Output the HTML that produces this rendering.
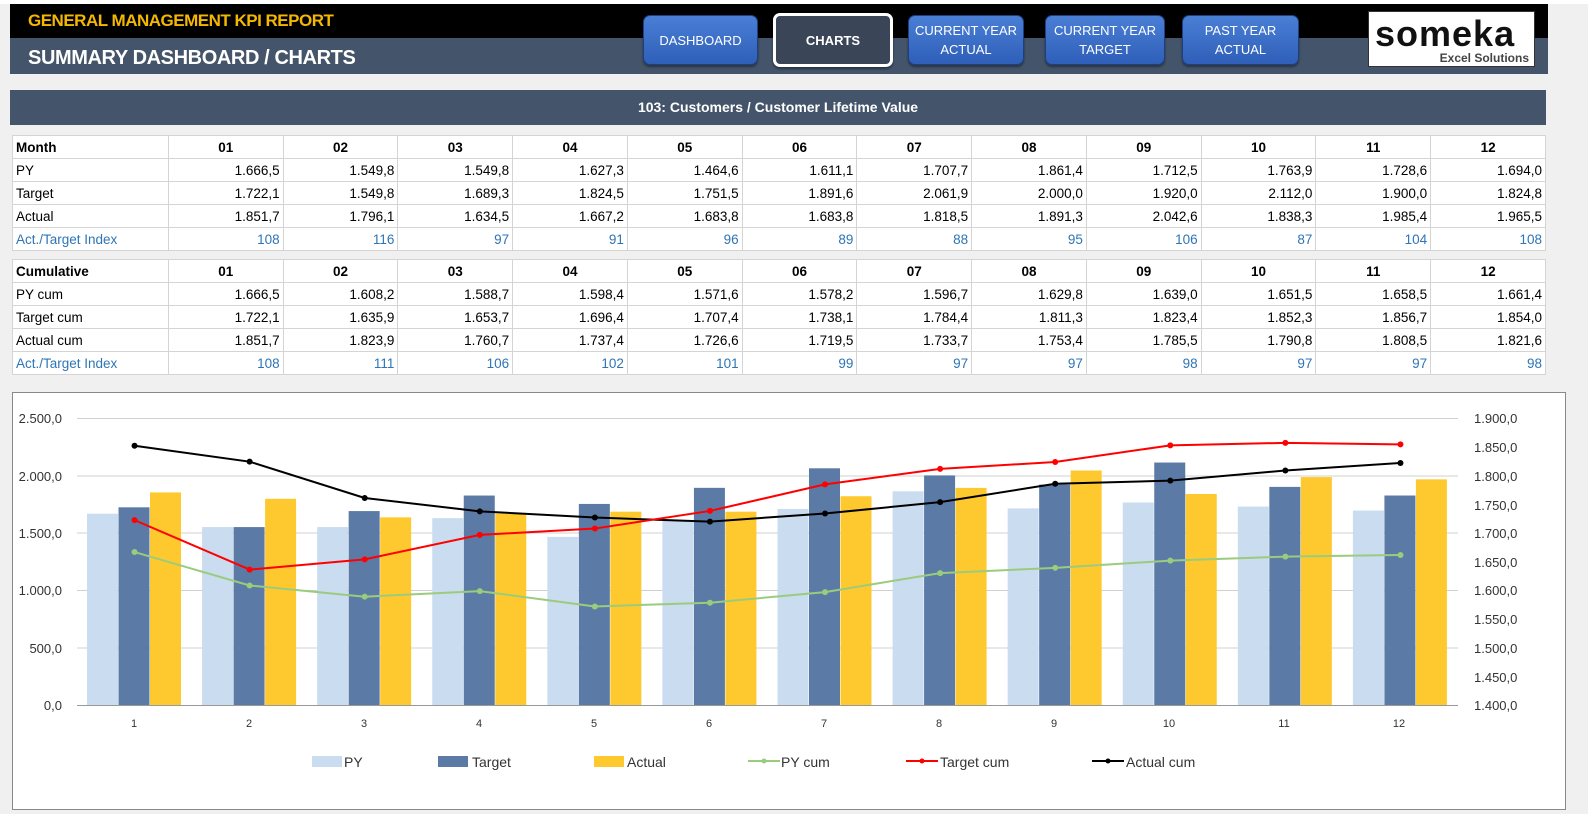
<!DOCTYPE html>
<html><head><meta charset="utf-8"><style>
*{margin:0;padding:0;box-sizing:border-box}
body{width:1588px;height:814px;background:#f0f0f0;font-family:"Liberation Sans",sans-serif;position:relative;overflow:hidden}
.top{position:absolute;left:0;top:0;width:1588px;height:4px;background:#fff}
.blk{position:absolute;left:10px;top:4px;width:1538px;height:34px;background:#000}
.sl{position:absolute;left:10px;top:38px;width:1538px;height:36px;background:#44546a}
.t1{position:absolute;left:28px;top:11px;color:#f5b800;font-weight:bold;font-size:17px;letter-spacing:-0.5px}
.t2{position:absolute;left:28px;top:47px;color:#fff;font-weight:bold;font-size:20px;letter-spacing:-0.4px}
.btn{position:absolute;top:15px;height:50px;border-radius:7px;background:linear-gradient(#4a7fd6,#2f5fb8);border:1px solid #1e3f80;color:#fff;font-size:13px;display:flex;align-items:center;justify-content:center;text-align:center;line-height:19px;box-shadow:0 2px 2px rgba(0,0,0,.4)}
.btn.on{background:#3a4558;border:3px solid #fff;top:13px;height:54px;font-weight:bold}
.logo{position:absolute;left:1368px;top:11px;width:167px;height:56px;background:#fff;border:1px solid #333}
.logo b{position:absolute;left:6px;top:1px;font-size:36px;font-weight:bold;color:#111;letter-spacing:1px}
.logo i{position:absolute;right:5px;top:39px;font-size:12px;font-style:normal;font-weight:bold;color:#444}
.bar{position:absolute;left:10px;top:90px;width:1536px;height:35px;background:#44546a;color:#fff;font-weight:bold;font-size:14px;text-align:center;line-height:35px}
table{position:absolute;left:12px;width:1534px;border-collapse:collapse;background:#fff;font-size:13.5px;border:1px solid #777}
td{height:23px;border:1px solid #d4d4d4;padding:0 3px;text-align:right;width:114.8px}
td:first-child{text-align:left;width:156px}
tr:first-child td{font-weight:bold;text-align:center}
tr:first-child td:first-child{text-align:left}
tr.ix td{color:#2e75b6}
.chart{position:absolute;left:12px;top:392px;width:1554px;height:418px;background:#fff;border:1px solid #888}
</style></head><body>
<div class="top"></div><div class="blk"></div><div class="sl"></div>
<div class="t1">GENERAL MANAGEMENT KPI REPORT</div>
<div class="t2">SUMMARY DASHBOARD / CHARTS</div>
<div class="btn" style="left:643px;width:115px">DASHBOARD</div>
<div class="btn on" style="left:773px;width:120px">CHARTS</div>
<div class="btn" style="left:908px;width:116px">CURRENT YEAR<br>ACTUAL</div>
<div class="btn" style="left:1045px;width:120px">CURRENT YEAR<br>TARGET</div>
<div class="btn" style="left:1182px;width:117px">PAST YEAR<br>ACTUAL</div>
<div class="logo"><b>someka</b><i>Excel Solutions</i></div>
<div class="bar">103: Customers / Customer Lifetime Value</div>
<table style="top:135px">
<tr><td>Month</td><td>01</td><td>02</td><td>03</td><td>04</td><td>05</td><td>06</td><td>07</td><td>08</td><td>09</td><td>10</td><td>11</td><td>12</td></tr>
<tr><td>PY</td><td>1.666,5</td><td>1.549,8</td><td>1.549,8</td><td>1.627,3</td><td>1.464,6</td><td>1.611,1</td><td>1.707,7</td><td>1.861,4</td><td>1.712,5</td><td>1.763,9</td><td>1.728,6</td><td>1.694,0</td></tr>
<tr><td>Target</td><td>1.722,1</td><td>1.549,8</td><td>1.689,3</td><td>1.824,5</td><td>1.751,5</td><td>1.891,6</td><td>2.061,9</td><td>2.000,0</td><td>1.920,0</td><td>2.112,0</td><td>1.900,0</td><td>1.824,8</td></tr>
<tr><td>Actual</td><td>1.851,7</td><td>1.796,1</td><td>1.634,5</td><td>1.667,2</td><td>1.683,8</td><td>1.683,8</td><td>1.818,5</td><td>1.891,3</td><td>2.042,6</td><td>1.838,3</td><td>1.985,4</td><td>1.965,5</td></tr>
<tr class="ix"><td>Act./Target Index</td><td>108</td><td>116</td><td>97</td><td>91</td><td>96</td><td>89</td><td>88</td><td>95</td><td>106</td><td>87</td><td>104</td><td>108</td></tr>
</table>
<table style="top:259px">
<tr><td>Cumulative</td><td>01</td><td>02</td><td>03</td><td>04</td><td>05</td><td>06</td><td>07</td><td>08</td><td>09</td><td>10</td><td>11</td><td>12</td></tr>
<tr><td>PY cum</td><td>1.666,5</td><td>1.608,2</td><td>1.588,7</td><td>1.598,4</td><td>1.571,6</td><td>1.578,2</td><td>1.596,7</td><td>1.629,8</td><td>1.639,0</td><td>1.651,5</td><td>1.658,5</td><td>1.661,4</td></tr>
<tr><td>Target cum</td><td>1.722,1</td><td>1.635,9</td><td>1.653,7</td><td>1.696,4</td><td>1.707,4</td><td>1.738,1</td><td>1.784,4</td><td>1.811,3</td><td>1.823,4</td><td>1.852,3</td><td>1.856,7</td><td>1.854,0</td></tr>
<tr><td>Actual cum</td><td>1.851,7</td><td>1.823,9</td><td>1.760,7</td><td>1.737,4</td><td>1.726,6</td><td>1.719,5</td><td>1.733,7</td><td>1.753,4</td><td>1.785,5</td><td>1.790,8</td><td>1.808,5</td><td>1.821,6</td></tr>
<tr class="ix"><td>Act./Target Index</td><td>108</td><td>111</td><td>106</td><td>102</td><td>101</td><td>99</td><td>97</td><td>97</td><td>98</td><td>97</td><td>97</td><td>98</td></tr>
</table>
<div class="chart"></div>
<svg id="c" width="1588" height="814" style="position:absolute;left:0;top:0" font-family="Liberation Sans, sans-serif" font-size="13" fill="#333">
<g stroke="#d0d0d0" stroke-width="1">
<line x1="77" x2="1458" y1="418.5" y2="418.5"/><line x1="77" x2="1458" y1="476" y2="476"/><line x1="77" x2="1458" y1="533" y2="533"/><line x1="77" x2="1458" y1="590.5" y2="590.5"/><line x1="77" x2="1458" y1="648" y2="648"/>
</g>
<g id="bars"></g>
<line x1="77" x2="1458" y1="705.5" y2="705.5" stroke="#999"/>
<g text-anchor="end"><text x="62" y="423">2.500,0</text><text x="62" y="481">2.000,0</text><text x="62" y="538">1.500,0</text><text x="62" y="595">1.000,0</text><text x="62" y="653">500,0</text><text x="62" y="710">0,0</text></g>
<g><text x="1474" y="423">1.900,0</text><text x="1474" y="452">1.850,0</text><text x="1474" y="481">1.800,0</text><text x="1474" y="510">1.750,0</text><text x="1474" y="538">1.700,0</text><text x="1474" y="567">1.650,0</text><text x="1474" y="595">1.600,0</text><text x="1474" y="624">1.550,0</text><text x="1474" y="653">1.500,0</text><text x="1474" y="682">1.450,0</text><text x="1474" y="710">1.400,0</text></g>
<g text-anchor="middle" font-size="11"><text x="134" y="727">1</text><text x="249" y="727">2</text><text x="364" y="727">3</text><text x="479" y="727">4</text><text x="594" y="727">5</text><text x="709" y="727">6</text><text x="824" y="727">7</text><text x="939" y="727">8</text><text x="1054" y="727">9</text><text x="1169" y="727">10</text><text x="1284" y="727">11</text><text x="1399" y="727">12</text></g>
<g id="lines"></g>
<g font-size="14">
<rect x="312" y="756" width="30" height="11" fill="#c9dcf0"/><text x="344" y="767">PY</text>
<rect x="438" y="756" width="30" height="11" fill="#5b7ba6"/><text x="472" y="767">Target</text>
<rect x="594" y="756" width="30" height="11" fill="#fec92e"/><text x="627" y="767">Actual</text>
<line x1="748" x2="780" y1="761" y2="761" stroke="#9bcb7d" stroke-width="2"/><circle cx="764" cy="761" r="2.5" fill="#9bcb7d"/><text x="781" y="767">PY cum</text>
<line x1="906" x2="938" y1="761" y2="761" stroke="#f00" stroke-width="2"/><circle cx="922" cy="761" r="2.5" fill="#f00"/><text x="940" y="767">Target cum</text>
<line x1="1092" x2="1124" y1="761" y2="761" stroke="#000" stroke-width="2"/><circle cx="1108" cy="761" r="2.5" fill="#000"/><text x="1126" y="767">Actual cum</text>
</g>
</svg>
<script>
var PY=[1666.5,1549.8,1549.8,1627.3,1464.6,1611.1,1707.7,1861.4,1712.5,1763.9,1728.6,1694.0],
T=[1722.1,1549.8,1689.3,1824.5,1751.5,1891.6,2061.9,2000,1920,2112,1900,1824.8],
A=[1851.7,1796.1,1634.5,1667.2,1683.8,1683.8,1818.5,1891.3,2042.6,1838.3,1985.4,1965.5],
PC=[1666.5,1608.2,1588.7,1598.4,1571.6,1578.2,1596.7,1629.8,1639.0,1651.5,1658.5,1661.4],
TC=[1722.1,1635.9,1653.7,1696.4,1707.4,1738.1,1784.4,1811.3,1823.4,1852.3,1856.7,1854.0],
AC=[1851.7,1823.9,1760.7,1737.4,1726.6,1719.5,1733.7,1753.4,1785.5,1790.8,1808.5,1821.6];
var b='',l='',cw=(1458-77)/12;
for(var i=0;i<12;i++){var s=77+i*cw+10;
[[PY,'#c9dcf0'],[T,'#5b7ba6'],[A,'#fec92e']].forEach(function(d,k){var h=d[0][i]*287/2500;b+='<rect x="'+(s+k*31.5)+'" y="'+(705-h)+'" width="31" height="'+h+'" fill="'+d[1]+'"/>';});}
[[PC,'#9bcb7d'],[TC,'#f00'],[AC,'#000']].forEach(function(d){var p=[];for(var i=0;i<12;i++){var x=77+cw*(i+.5),y=705-(d[0][i]-1400)*0.574;p.push(x+','+y);l+='<circle cx="'+x+'" cy="'+y+'" r="3" fill="'+d[1]+'"/>';}
l='<polyline points="'+p.join(' ')+'" fill="none" stroke="'+d[1]+'" stroke-width="2"/>'+l;});
document.getElementById('bars').innerHTML=b;document.getElementById('lines').innerHTML=l;
</script>
</body></html>
